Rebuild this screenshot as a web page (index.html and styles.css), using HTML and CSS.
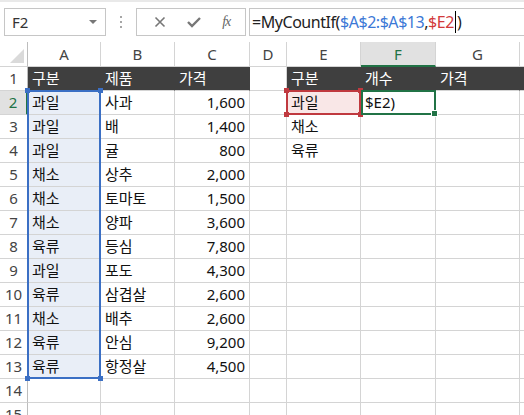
FILE: index.html
```html
<!DOCTYPE html>
<html lang="ko">
<head>
    <meta charset="UTF-8">
    <title>MyCountIf</title>
    <link rel="stylesheet" href="styles.css">
</head>
<body>
    <div class="bar">
        <div class="namebox">
            <span>F2</span>
            <span class="caret"></span>
        </div>
        <div class="grip"><i></i><i></i><i></i></div>
        <div class="fnbox">
            <svg width="12" height="12" viewBox="0 0 12 12"><path d="M1.5 1.5 L10.5 10.5 M10.5 1.5 L1.5 10.5" stroke="#777" stroke-width="1.6" fill="none"/></svg>
            <svg width="14" height="12" viewBox="0 0 14 12"><path d="M1 6 L5 10 L13 2" stroke="#777" stroke-width="2.4" fill="none"/></svg>
            <span class="fx">fx</span>
        </div>
        <div class="formula">=MyCountIf(<span class="ref-a">$A$2:$A$13</span>,<span class="ref-e">$E2</span><span class="cursor"></span>)</div>
    </div>

    <div class="sheet">
        <div class="cells">
            <!-- column headers -->
            <div class="corner"><span class="tri"></span></div>
            <div class="ch">A</div><div class="ch">B</div><div class="ch">C</div><div class="ch">D</div>
            <div class="ch">E</div><div class="ch on">F</div><div class="ch">G</div><div class="ch"></div>

            <div class="rh">1</div>
            <div class="c dk">구분</div><div class="c dk">제품</div><div class="c dk">가격</div><div class="c"></div>
            <div class="c dk">구분</div><div class="c dk">개수</div><div class="c dk">가격</div><div class="c dk"></div>

            <div class="rh on">2</div>
            <div class="c sel">과일</div><div class="c">사과</div><div class="c n">1,600</div><div class="c"></div>
            <div class="c pink">과일</div><div class="c">$E2)</div><div class="c"></div><div class="c"></div>

            <div class="rh">3</div>
            <div class="c sel">과일</div><div class="c">배</div><div class="c n">1,400</div><div class="c"></div>
            <div class="c">채소</div><div class="c"></div><div class="c"></div><div class="c"></div>

            <div class="rh">4</div>
            <div class="c sel">과일</div><div class="c">귤</div><div class="c n">800</div><div class="c"></div>
            <div class="c">육류</div><div class="c"></div><div class="c"></div><div class="c"></div>

            <div class="rh">5</div>
            <div class="c sel">채소</div><div class="c">상추</div><div class="c n">2,000</div><div class="c"></div>
            <div class="c"></div><div class="c"></div><div class="c"></div><div class="c"></div>

            <div class="rh">6</div>
            <div class="c sel">채소</div><div class="c">토마토</div><div class="c n">1,500</div><div class="c"></div>
            <div class="c"></div><div class="c"></div><div class="c"></div><div class="c"></div>

            <div class="rh">7</div>
            <div class="c sel">채소</div><div class="c">양파</div><div class="c n">3,600</div><div class="c"></div>
            <div class="c"></div><div class="c"></div><div class="c"></div><div class="c"></div>

            <div class="rh">8</div>
            <div class="c sel">육류</div><div class="c">등심</div><div class="c n">7,800</div><div class="c"></div>
            <div class="c"></div><div class="c"></div><div class="c"></div><div class="c"></div>

            <div class="rh">9</div>
            <div class="c sel">과일</div><div class="c">포도</div><div class="c n">4,300</div><div class="c"></div>
            <div class="c"></div><div class="c"></div><div class="c"></div><div class="c"></div>

            <div class="rh">10</div>
            <div class="c sel">육류</div><div class="c">삼겹살</div><div class="c n">2,600</div><div class="c"></div>
            <div class="c"></div><div class="c"></div><div class="c"></div><div class="c"></div>

            <div class="rh">11</div>
            <div class="c sel">채소</div><div class="c">배추</div><div class="c n">2,600</div><div class="c"></div>
            <div class="c"></div><div class="c"></div><div class="c"></div><div class="c"></div>

            <div class="rh">12</div>
            <div class="c sel">육류</div><div class="c">안심</div><div class="c n">9,200</div><div class="c"></div>
            <div class="c"></div><div class="c"></div><div class="c"></div><div class="c"></div>

            <div class="rh">13</div>
            <div class="c sel">육류</div><div class="c">항정살</div><div class="c n">4,500</div><div class="c"></div>
            <div class="c"></div><div class="c"></div><div class="c"></div><div class="c"></div>

            <div class="rh">14</div>
            <div class="c"></div><div class="c"></div><div class="c"></div><div class="c"></div>
            <div class="c"></div><div class="c"></div><div class="c"></div><div class="c"></div>

            <div class="rh">15</div>
            <div class="c"></div><div class="c"></div><div class="c"></div><div class="c"></div>
            <div class="c"></div><div class="c"></div><div class="c"></div><div class="c"></div>
        </div>

        <!-- reference highlights drawn over the cells -->
        <div class="marks">
            <div class="frame blue range-a">
                <i class="h tl"></i><i class="h tr"></i><i class="h bl"></i><i class="h br"></i>
            </div>
            <div class="frame red range-e">
                <i class="h tl"></i><i class="h tr"></i><i class="h bl"></i><i class="h br"></i>
            </div>
            <div class="frame green active">
                <i class="h br"></i>
            </div>
        </div>
    </div>
</body>
</html>
```

FILE: styles.css
```css
body {
    margin: 0;
    width: 524px;
    height: 415px;
    overflow: hidden;
    background: #ffffff;
    font-family: 'Noto Sans', 'Noto Sans CJK KR', sans-serif;
    color: #222;
}

/* formula bar */
.bar {
    display: flex;
    align-items: center;
    height: 42px;
    padding: 0 0 0 4px;
    border-top: 2px solid #e9e9e9;
    box-sizing: border-box;
}

.namebox {
    width: 102px;
    height: 28px;
    box-sizing: border-box;
    border: 1px solid #c6c6c6;
    display: flex;
    align-items: center;
    justify-content: space-between;
    padding: 0 8px 0 7px;
    font-size: 15px;
    color: #333;
}

.caret {
    width: 0;
    height: 0;
    border-left: 4px solid transparent;
    border-right: 4px solid transparent;
    border-top: 4px solid #777;
}

.grip {
    width: 30px;
    display: flex;
    flex-direction: column;
    align-items: center;
    gap: 3px;
}

.grip i {
    width: 2px;
    height: 2px;
    background: #a6a6a6;
}

.fnbox {
    width: 110px;
    height: 28px;
    box-sizing: border-box;
    border: 1px solid #c6c6c6;
    display: flex;
    align-items: center;
    justify-content: space-around;
    padding: 0 4px 0 6px;
}

.fx {
    font-family: 'Liberation Serif', serif;
    font-style: italic;
    font-size: 14px;
    color: #666;
    letter-spacing: -1px;
}

.formula {
    flex: 1;
    height: 28px;
    box-sizing: border-box;
    margin-left: 3px;
    border: 1px solid #c6c6c6;
    border-right: none;
    padding-left: 2px;
    font-size: 16px;
    letter-spacing: -0.45px;
    line-height: 26px;
    color: #222;
    white-space: nowrap;
}

.ref-a { color: #3b78d6; }
.ref-e { color: #d2393a; }

.cursor {
    display: inline-block;
    width: 1px;
    height: 22px;
    background: #000;
    vertical-align: middle;
    margin: -3px 1px 0 1px;
}

/* sheet */
.sheet {
    display: grid;
}

.cells,
.marks {
    grid-area: 1 / 1;
    display: grid;
    grid-template-columns: 28px 73px 74px 75px 37px 74px 75px 84px 1fr;
    grid-template-rows: 25px repeat(15, 24px);
}

.marks {
    pointer-events: none;
}

.cells > div {
    box-sizing: border-box;
    border-right: 1px solid #d4d4d4;
    border-bottom: 1px solid #d4d4d4;
    font-size: 15px;
    line-height: 23px;
    white-space: nowrap;
    overflow: hidden;
}

.corner {
    position: relative;
    border-right-color: #bdbdbd !important;
}

.tri {
    position: absolute;
    right: 3px;
    bottom: 3px;
    width: 0;
    height: 0;
    border-left: 14px solid transparent;
    border-bottom: 14px solid #dadada;
}

.ch {
    text-align: center;
    color: #444;
    padding-top: 1px;
}

.ch.on {
    background: #e1e1e1;
    color: #217346;
    border-bottom: 2px solid #217346 !important;
}

.rh {
    text-align: center;
    color: #444;
    border-right-color: #bdbdbd !important;
}

.rh.on {
    background: #e1e1e1;
    color: #217346;
    border-right: 2px solid #217346 !important;
}

.c {
    padding: 0 4px;
    color: #111;
}

.c.n {
    text-align: right;
}

.c.dk {
    background: #3f3f3f;
    border-right-color: #3f3f3f;
    color: #ffffff;
}

.c.sel {
    background: #e9eef7;
}

.c.pink {
    background: #f9e7e7;
}

/* reference frames */
.frame {
    position: relative;
    margin: -1px 0 0 -1px;
    border: 2px solid;
}

.frame.blue { border-color: #3b6fc4; }
.frame.red { border-color: #c0393f; }
.frame.green { border-color: #217346; }

.range-a {
    grid-column: 2;
    grid-row: 3 / 15;
}

.range-e {
    grid-column: 6;
    grid-row: 3;
}

.active {
    grid-column: 7;
    grid-row: 3;
    margin-left: 0;
}

.h {
    position: absolute;
    width: 5px;
    height: 5px;
    background: inherit;
}

.blue .h { background: #3b6fc4; }
.red .h { background: #c0393f; }
.green .h { background: #217346; border: 1px solid #fff; }

.tl { left: -4px; top: -4px; }
.tr { right: -4px; top: -4px; }
.bl { left: -4px; bottom: -4px; }
.br { right: -4px; bottom: -4px; }
```
